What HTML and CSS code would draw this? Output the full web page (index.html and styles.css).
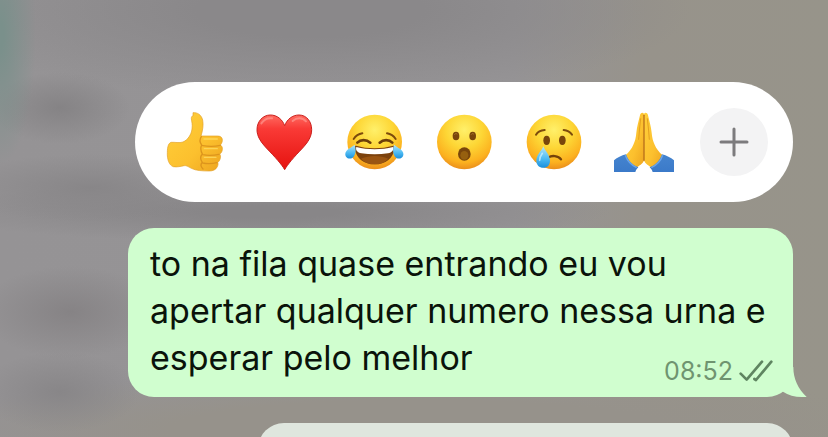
FILE: index.html
```html
<!DOCTYPE html>
<html lang="pt-BR">
<head>
  <meta charset="UTF-8">
  <meta name="viewport" content="width=device-width, initial-scale=1.0">
  <title>Reagir à mensagem</title>
  <link rel="stylesheet" href="styles.css">
</head>
<body>
  <!-- Shared gradients -->
  <svg class="defs" aria-hidden="true">
    <defs>
      <radialGradient id="face" cx="50%" cy="28%" r="74%">
        <stop offset="0" stop-color="#fff06a"/>
        <stop offset="0.45" stop-color="#fdd635"/>
        <stop offset="0.8" stop-color="#fcb11f"/>
        <stop offset="1" stop-color="#e8891c"/>
      </radialGradient>
      <linearGradient id="heart" x1="0" y1="0" x2="0" y2="1">
        <stop offset="0" stop-color="#ff6a60"/>
        <stop offset="0.25" stop-color="#f93a36"/>
        <stop offset="1" stop-color="#e6120f"/>
      </linearGradient>
      <linearGradient id="skin" x1="0" y1="0" x2="1" y2="1">
        <stop offset="0" stop-color="#ffd03a"/>
        <stop offset="0.6" stop-color="#fcc02e"/>
        <stop offset="1" stop-color="#eda41f"/>
      </linearGradient>
      <linearGradient id="tear" x1="0" y1="0" x2="0" y2="1">
        <stop offset="0" stop-color="#b5e6fb"/>
        <stop offset="0.6" stop-color="#4ab9f2"/>
        <stop offset="1" stop-color="#1c8fdc"/>
      </linearGradient>
      <linearGradient id="sleeve" x1="0" y1="0" x2="0" y2="1">
        <stop offset="0" stop-color="#4584cf"/>
        <stop offset="1" stop-color="#3b7ac9"/>
      </linearGradient>
    </defs>
  </svg>

  <main class="chat">
    <div class="reactions">
      <button class="reaction" title="Curtir">
        <svg viewBox="42 36 180 180">
          <path fill="url(#skin)" stroke="#e3a025" stroke-width="2" d="M129 38c13-1 25 6 29 22 3 14 0 32-5 48h50c10 0 15 6 14 14-1 6-3 10-6 13 5 3 7 8 6 14-1 7-4 11-8 13 3 4 3 9 2 13-2 7-4 10-8 12 2 4 1 9-1 13-4 9-13 13-24 13-22 0-40-1-54-8-11-6-15-9-22-8-10 2-20 5-32 3-13-4-19-22-18-43 0-17 4-29 12-30 10-1 24 3 35-1 14-6 25-22 27-39 2-14-1-22-2-31 0-5 1-8 5-8z"/>
          <path fill="none" stroke="#dd951d" stroke-width="4" stroke-linecap="round" d="M154 110c-5 7-5 17 1 25-4 8-3 18 2 27-6 7-6 17 0 25-6 6-4 14 2 20M158 137c17 3 37 3 53-1M158 164c16 3 34 2 49-1M158 189c14 3 30 2 43-1"/>
          <path fill="none" stroke="#ffe06a" stroke-width="4" stroke-linecap="round" opacity=".7" d="M162 117h40M163 146h39M163 172h35"/>
        </svg>
      </button>
      <button class="reaction" title="Amei">
        <svg viewBox="42 36 180 180">
          <path fill="url(#heart)" stroke="#c9201c" stroke-width="3" d="M134 209C126 194 104 170 82 147 62 126 51 109 51 89c0-24 17-44 40-44 20 0 36 13 43 32 7-19 23-32 43-32 23 0 38 20 38 44 0 20-10 37-30 58-22 23-43 47-51 62z"/>
          <path fill="none" stroke="#ffaaa0" stroke-width="6" stroke-linecap="round" opacity=".55" d="M64 70c8-12 19-17 32-15M158 63c12-11 30-11 40 1"/>
        </svg>
      </button>
      <button class="reaction" title="Haha">
        <svg viewBox="42 36 180 180">
          <circle cx="134" cy="126" r="82" fill="url(#face)"/>
          <path fill="none" stroke="#7d4b0c" stroke-width="6" stroke-linecap="round" d="M71 117c6-9 15-15 26-17M171 100c11 2 20 8 26 17"/>
          <path fill="none" stroke="#6d3f0a" stroke-width="8" stroke-linecap="round" d="M82 128c10-10 27-10 39 0M149 128c11-10 28-10 38 0"/>
          <path fill="#7c420d" d="M78 137c34 10 76 10 112 0 4 0 5 4 4 9-5 29-27 47-60 47-32 0-55-18-60-47-1-5 0-9 4-9z"/>
          <path fill="#fff" d="M79 141c34 9 76 9 110 0 3 9-3 17-15 19-26 4-54 4-80 0-12-2-18-10-15-19z"/>
          <path fill="#9a5512" d="M93 176c25-11 57-11 82 0-10 11-24 17-41 17s-31-6-41-17z"/>
          <path fill="url(#tear)" d="M74 134c5 14 3 28-3 36-6 7-17 8-23 0-5-8-1-17 7-23 8-5 14-9 19-13zM192 134c-5 14-3 28 3 36 6 7 17 8 23 0 5-8 1-17-7-23-8-5-14-9-19-13z"/>
        </svg>
      </button>
      <button class="reaction" title="Uau">
        <svg viewBox="42 36 180 180">
          <circle cx="133" cy="126" r="82" fill="url(#face)"/>
          <g fill="#79460b">
            <ellipse cx="108" cy="108" rx="10" ry="13"/>
            <ellipse cx="158" cy="108" rx="10" ry="13"/>
            <ellipse cx="133" cy="162" rx="19" ry="20"/>
          </g>
          <ellipse cx="133" cy="166" rx="12" ry="13" fill="#96600f"/>
          <path fill="none" stroke="#a8762b" stroke-width="3" stroke-linecap="round" d="M104 103c2-3 5-3 7-1M154 103c2-3 5-3 7-1"/>
        </svg>
      </button>
      <button class="reaction" title="Triste">
        <svg viewBox="42 36 180 180">
          <circle cx="132" cy="126" r="82" fill="url(#face)"/>
          <g fill="#79460b">
            <ellipse cx="110" cy="121" rx="10" ry="14"/>
            <ellipse cx="157" cy="121" rx="10" ry="14"/>
          </g>
          <path fill="none" stroke="#7d4b0c" stroke-width="6" stroke-linecap="round" d="M78 104c5-8 14-13 26-14M161 90c11 1 20 7 25 14"/>
          <path fill="none" stroke="#75420a" stroke-width="7" stroke-linecap="round" d="M116 172c8-6 29-6 37 6"/>
          <path fill="url(#tear)" d="M100 139c4 12 20 26 20 43 0 13-8 21-20 21s-21-8-21-21c0-17 17-31 21-43z"/>
          <path fill="none" stroke="#d9f3fd" stroke-width="5" stroke-linecap="round" opacity=".7" d="M97 160c-5 7-8 14-8 21"/>
        </svg>
      </button>
      <button class="reaction" title="Obrigado">
        <svg viewBox="42 36 180 180">
          <path fill="url(#skin)" d="M132 42c-3-6-11-4-12 4-4 18-9 33-11 52-1 14-4 25-9 36-5 12-13 22-24 32 4 19 18 32 32 38 8-6 21-12 24-23z"/>
          <path fill="url(#skin)" d="M132 42c3-6 11-4 12 4 4 18 9 33 11 52 1 14 4 25 9 36 5 12 13 22 24 32-4 19-18 32-32 38-8-6-21-12-24-23z"/>
          <path fill="none" stroke="#b9701a" stroke-width="4" stroke-linecap="round" d="M132 46v135"/>
          <path fill="none" stroke="#e5a11f" stroke-width="3" stroke-linecap="round" d="M122 56c-2 20-5 42-6 62M142 56c2 20 5 42 6 62"/>
          <path fill="url(#sleeve)" d="M42 181c10-8 22-14 36-18 6 19 19 32 37 39-4 4-7 8-9 14H42zM222 181c-10-8-22-14-36-18-6 19-19 32-37 39 4 4 7 8 9 14h64z"/>
          <path fill="none" stroke="#6da5e8" stroke-width="4" d="M76 166c6 18 17 29 34 37M188 166c-6 18-17 29-34 37"/>
        </svg>
      </button>
      <button class="reaction more" title="Mais reações">
        <svg viewBox="0 0 32 32">
          <path fill="none" stroke="#7c7b7d" stroke-width="3" stroke-linecap="round" d="M16 3v26M3 16h26"/>
        </svg>
      </button>
    </div>

    <article class="bubble">
      <p class="message">
        to na fila quase entrando eu vou apertar qualquer numero nessa urna e esperar pelo melhor
        <span class="meta">
          <time datetime="08:52">08:52</time>
          <svg class="checks" viewBox="298 54 102 72">
            <path fill="none" stroke="#5f8561" stroke-width="8" stroke-linecap="round" stroke-linejoin="round" d="M303 98l18 18 46-54M344 114l5 3 46-55"/>
          </svg>
        </span>
      </p>
      <svg class="tail" viewBox="400 80 102 90">
        <path d="M461 80c0 36 14 65 40 90-26 1-52-3-71-16l-30-4V80z"/>
      </svg>
    </article>

    <div class="menu"></div>
  </main>
</body>
</html>
```

FILE: styles.css
```css
* {
  box-sizing: border-box;
}
body {
  margin: 0;
  font-family: Inter, "Liberation Sans", sans-serif;
  /* Dimmed, out of focus conversation behind the overlay */
  background:
    radial-gradient(ellipse 36px 130px at 0 35px, #7a908b 10%, transparent),
    radial-gradient(ellipse 70px 36px at 60px 108px, #858385, transparent),
    radial-gradient(ellipse 140px 34px at 90px 188px, #888688, transparent),
    radial-gradient(ellipse 90px 46px at 70px 312px, #868385, transparent),
    radial-gradient(ellipse 80px 40px at 60px 392px, #888688, transparent),
    radial-gradient(ellipse 340px 30px at 270px 212px, #888688 20%, transparent),
    radial-gradient(ellipse 380px 90px at 310px 10px, #8a888a 30%, transparent),
    radial-gradient(ellipse 500px 60px at 420px 430px, #96928b 50%, transparent),
    linear-gradient(to right, #959395 0, #969496 62%, #97938b 78%, #97948a 100%);
}
.defs {
  position: absolute;
  width: 0;
  height: 0;
}
.chat {
  height: 100vh;
  padding: 82px 35px 0 128px;
  display: flex;
  flex-direction: column;
  overflow: hidden;
}

/* Reaction bar */
.reactions {
  display: flex;
  align-items: center;
  margin-left: 7px;
  padding: 26px 14px;
  border-radius: 60px;
  background: #fff;
}
.reaction {
  flex: 1;
  height: 68px;
  padding: 0;
  border: none;
  background: none;
  display: flex;
  justify-content: center;
  align-items: center;
  cursor: pointer;
}
.reaction svg {
  width: 60px;
  height: 60px;
}
.more {
  flex: 0 0 68px;
  margin: 0 11px;
  border-radius: 50%;
  background: #f3f3f4;
}
.more svg {
  width: 32px;
  height: 32px;
}

/* Message */
.bubble {
  position: relative;
  display: flow-root;
  flex-shrink: 0;
  margin-top: 26px;
  padding: 12px 20px 14px 22px;
  border-radius: 26px;
  background: #d0fecf;
}
.message {
  margin: 0;
  font-size: 34px;
  line-height: 47px;
  color: #0a130a;
}
/* Sits at the end of the last line */
.meta {
  float: right;
  display: flex;
  align-items: center;
  gap: 6px;
  margin-top: 25px;
  font-size: 25px;
  line-height: 24px;
  color: #6f9470;
}
.checks {
  width: 34px;
  height: 24px;
}
.tail {
  position: absolute;
  right: -14px;
  bottom: 0;
  width: 34px;
  height: 30px;
  fill: #d0fecf;
}

/* Top of the context menu, the rest runs off the screen */
.menu {
  flex: 0 0 60px;
  margin: 26px 0 0 130px;
  border-radius: 26px;
  background: #dfe6de;
}
```
